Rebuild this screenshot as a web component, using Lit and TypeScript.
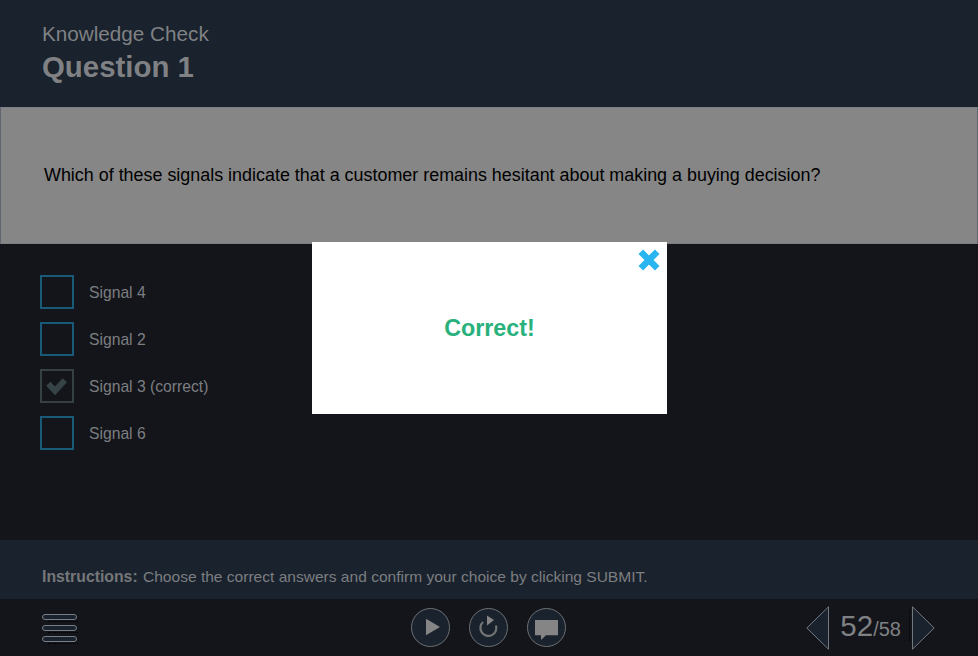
import { LitElement, html, css } from "lit";
import { customElement } from "lit/decorators.js";

const OPTIONS = [
  { label: "Signal 4", checked: false },
  { label: "Signal 2", checked: false },
  { label: "Signal 3 (correct)", checked: true },
  { label: "Signal 6", checked: false },
];

const SHADOW = "M38.700 15A20.500 20.500 0 0 1 15 38.700";

@customElement("app-root")
export class AppRoot extends LitElement {
  static styles = css`
    :host {
      display: block;
      position: relative;
      width: 978px;
      height: 656px;
      overflow: hidden;
      background: #13151a;
      font-family: "Liberation Sans", Arial, sans-serif;
    }
    .page { display: flex; flex-direction: column; height: 656px; }
    .header {
      height: 107px;
      box-sizing: border-box;
      background: #1a222d;
      padding: 22px 0 0 42px;
      color: #7f8184;
      flex: none;
    }
    .kicker { font-size: 20.7px; line-height: 24px; }
    .title { font-size: 29.4px; line-height: 42px; font-weight: 700; }
    .question {
      height: 137px;
      box-sizing: border-box;
      flex: none;
      background: #868686;
      border-style: solid;
      border-width: 1px;
      border-color: #7c7f86 #5f6672;
      display: flex;
      align-items: center;
      padding: 0 0 1px 43px;
      font-size: 17.92px;
      color: #000;
    }
    .options {
      flex: 1;
      display: flex;
      flex-direction: column;
      gap: 13px;
      padding: 31px 0 0 40px;
    }
    .option { display: flex; align-items: center; gap: 15px; height: 34px; }
    .box {
      width: 34px;
      height: 34px;
      box-sizing: border-box;
      border: 2px solid #185a78;
      display: flex;
      align-items: center;
      justify-content: center;
    }
    .box.checked { border-color: #364144; }
    .option-label { font-size: 15.7px; color: #7c7e81; padding-top: 2px; }
    .instructions {
      height: 59px;
      flex: none;
      box-sizing: border-box;
      background: #1a222d;
      padding: 28px 0 0 42px;
      font-size: 15.55px;
      line-height: 18px;
      color: #7c7e81;
    }
    .instructions b { font-size: 15.8px; color: #75777a; margin-right: 1px; }
    .toolbar {
      height: 57px;
      flex: none;
      display: grid;
      grid-template-columns: 1fr auto 1fr;
      align-items: center;
      padding: 0 43px 0 42px;
    }
    .menu { display: flex; flex-direction: column; gap: 5px; width: 35px; }
    .menu span {
      position: relative;
      height: 6px;
      box-sizing: border-box;
      border: 1px solid #767f88;
      border-radius: 3px;
      background: #1a222d;
    }
    .menu span::after {
      content: "";
      position: absolute;
      left: 5px;
      right: -2px;
      top: 6px;
      border-bottom: 1px dotted #000;
    }
    .controls { display: flex; gap: 19px; }
    .round {
      width: 39px;
      height: 39px;
      box-sizing: border-box;
      border: 1px solid #6d7073;
      border-radius: 50%;
      background: #1a222d;
    }
    .pager { position: relative; display: flex; align-items: center; justify-content: flex-end; gap: 11px; }
    .count { color: #7f8184; font-size: 29.5px; line-height: 36px; }
    .count small { font-size: 20px; }
    svg { display: block; overflow: visible; }
    .foot-dots {
      position: absolute;
      top: 54px;
      width: 36px;
      border-bottom: 1px dotted #34373c;
    }
    .foot-dots.left { right: 102px; }
    .foot-dots.right { right: -6px; }
    .modal {
      position: absolute;
      left: 312px;
      top: 242px;
      width: 355px;
      height: 172px;
      background: #fff;
      display: flex;
      align-items: center;
      justify-content: center;
      box-sizing: border-box;
    }
    .correct {
      color: #28b17c;
      font-size: 23.3px;
      font-weight: 700;
    }
    .close { position: absolute; right: 6px; top: 6px; }
  `;

  private tick() {
    return html`<svg width="26" height="22" viewBox="0 0 26 22">
      <path d="M4.300 8.800L11 15.800 20.800 5.200" fill="none" stroke="#364346" stroke-width="6" />
    </svg>`;
  }

  private shadow() {
    return html`<path d=${SHADOW} fill="none" stroke="#000" stroke-dasharray="1 1.500" />`;
  }

  render() {
    return html`
      <div class="page">
        <header class="header">
          <div class="kicker">Knowledge Check</div>
          <div class="title">Question 1</div>
        </header>
        <section class="question">Which of these signals indicate that a customer remains hesitant about making a buying decision?</section>
        <section class="options">
          ${OPTIONS.map(
            (o) => html`<div class="option">
              <div class="box ${o.checked ? "checked" : ""}">${o.checked ? this.tick() : ""}</div>
              <span class="option-label">${o.label}</span>
            </div>`
          )}
        </section>
        <div class="instructions"><b>Instructions:</b> Choose the correct answers and confirm your choice by clicking SUBMIT.</div>
        <footer class="toolbar">
          <div class="menu"><span></span><span></span><span></span></div>
          <div class="controls">
            <div class="round">
              <svg width="37" height="37" viewBox="0 0 37 37">
                ${this.shadow()}
                <path d="M14 9.700L28 18 14 26.300z" fill="#858585" />
              </svg>
            </div>
            <div class="round">
              <svg width="37" height="37" viewBox="0 0 37 37">
                ${this.shadow()}
                <path d="M13 13A8 8 0 1 0 26 16.500" fill="none" stroke="#737577" stroke-width="2.200" />
                <path d="M17 6.500L24 11 17 16.500z" fill="#858585" />
              </svg>
            </div>
            <div class="round">
              <svg width="37" height="37" viewBox="0 0 37 37">
                ${this.shadow()}
                <path d="M7 11H30V26.300H18L13 31V26.300H7z" fill="#858585" />
              </svg>
            </div>
          </div>
          <div class="pager">
            <svg width="23" height="44" viewBox="0 0 23 44"><path d="M22.500 .8V43.200L.8 22z" fill="#1a222d" stroke="#74787c" /></svg>
            <div class="count">52<small>/58</small></div>
            <svg width="23" height="44" viewBox="0 0 23 44">
              <path d="M-2.500 4V36" fill="none" stroke="#000" stroke-dasharray="1 1" />
              <path d="M.5 .8V43.200L22.200 22z" fill="#1a222d" stroke="#74787c" />
            </svg>
            <span class="foot-dots left"></span>
            <span class="foot-dots right"></span>
          </div>
        </footer>
      </div>
      <div class="modal">
        <div class="correct">Correct!</div>
        <svg class="close" width="24" height="24" viewBox="0 0 24 24">
          <path d="M3.800 3.800l16.400 16.400M20.200 3.800L3.800 20.200" stroke="#29b6f0" stroke-width="6.500" />
        </svg>
      </div>
    `;
  }
}
